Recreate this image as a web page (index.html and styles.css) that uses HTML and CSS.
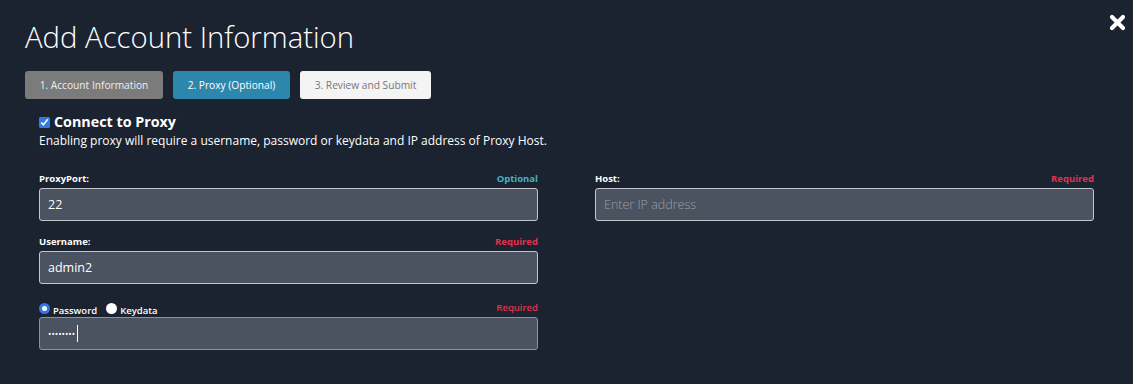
FILE: index.html
```html
<!DOCTYPE html>
<html>
<head>
<meta charset="utf-8">
<link rel="stylesheet" href="styles.css">
</head>
<body>
<div class="page">
  <button class="close" aria-label="Close">
    <svg width="17" height="17" viewBox="0 0 17 17"><path d="M3 3 L14 14 M14 3 L3 14" stroke="#fff" stroke-width="4.2" stroke-linecap="round"/></svg>
  </button>
  <h1 class="title">Add Account Information</h1>
  <div class="steps">
    <div class="step step-done">1. Account Information</div>
    <div class="step step-active">2. Proxy (Optional)</div>
    <div class="step step-next">3. Review and Submit</div>
  </div>
  <div class="section">
    <label class="connect"><input type="checkbox" checked> <span>Connect to Proxy</span></label>
    <p class="desc">Enabling proxy will require a username, password or keydata and IP address of Proxy Host.</p>
    <div class="grid">
      <div class="col">
        <div class="field">
          <div class="labelrow"><span class="lbl">ProxyPort:</span><span class="opt">Optional</span></div>
          <div class="input">22</div>
        </div>
        <div class="field">
          <div class="labelrow"><span class="lbl">Username:</span><span class="req">Required</span></div>
          <div class="input">admin2</div>
        </div>
        <div class="field">
          <div class="labelrow radios">
            <span class="rgroup">
              <label class="radio"><span class="rdot on"></span>Password</label>
              <label class="radio"><span class="rdot"></span>Keydata</label>
            </span>
            <span class="req">Required</span>
          </div>
          <div class="input focus"><span class="dots">••••••••</span><span class="caret"></span></div>
        </div>
      </div>
      <div class="col">
        <div class="field">
          <div class="labelrow"><span class="lbl">Host:</span><span class="req">Required</span></div>
          <div class="input placeholder">Enter IP address</div>
        </div>
      </div>
    </div>
  </div>
</div>
</body>
</html>
```
FILE: styles.css
```css
* { box-sizing: border-box; }
html, body { margin: 0; padding: 0; }
body {
  background: #1b2230;
  font-family: "Open Sans", "Noto Sans", sans-serif;
  color: #fff;
  width: 1133px;
  height: 384px;
  overflow: hidden;
}
.page {
  position: relative;
  padding: 16px 0 0 25px;
}
.close {
  position: absolute;
  top: 14px;
  right: 7px;
  background: none;
  border: 0;
  padding: 0;
  width: 17px;
  height: 17px;
}
.close svg { display: block; }
.title {
  margin: 0;
  font-weight: 300;
  font-size: 29.3px;
  line-height: 42px;
}
.steps {
  display: flex;
  gap: 10px;
  margin-top: 13px;
}
.step {
  height: 28px;
  line-height: 28px;
  font-size: 10.2px;
  border-radius: 3px;
  text-align: center;
}
.step-done { width: 138px; background: #7b7b7b; color: #eee; }
.step-active { width: 117px; background: #2d87ad; color: #fff; }
.step-next { width: 131px; background: #f4f4f4; color: #777; }
.section {
  padding-left: 14px;
  margin-top: 14px;
}
.connect {
  display: flex;
  align-items: center;
  gap: 4px;
  font-weight: 700;
  font-size: 14.3px;
  line-height: 18px;
}
.connect input {
  margin: 0;
  width: 11px;
  height: 11px;
  accent-color: #2f7ae5;
}
.desc {
  margin: 1px 0 0;
  font-size: 12px;
  line-height: 18px;
}
.grid {
  display: grid;
  grid-template-columns: 499px 499px;
  column-gap: 57px;
  margin-top: 21px;
}
.field { margin-bottom: 13px; }
.labelrow {
  display: flex;
  justify-content: space-between;
  align-items: flex-end;
  font-size: 9.5px;
  font-weight: 700;
  height: 14px;
  margin-bottom: 3px;
}
.lbl { color: #fff; }
.opt { color: #3fb6c6; }
.req { color: #e0334f; }
.input {
  height: 33px;
  border: 1.5px solid #c3c7cc;
  border-radius: 3px;
  background: #4b5260;
  padding: 0 8px;
  display: flex;
  align-items: center;
  font-size: 12.5px;
  color: #fff;
}
.input.placeholder { color: #9a9fa8; font-weight: 300; }
.input.focus { border-color: #6c9cc4; }
.dots { font-size: 9px; letter-spacing: 0; }
.caret { width: 1px; height: 17px; background: #fff; margin-left: 2px; }
.radios { font-weight: 600; height: 17px; }
.rgroup { display: flex; gap: 9px; align-items: flex-end; }
.radio { display: flex; align-items: center; gap: 3px; font-size: 9.5px; line-height: 12px; position: relative; top: 3px; }
.rdot {
  width: 11px; height: 11px; border-radius: 50%;
  background: #fff;
  position: relative; top: -3px;
}
.rdot.on { background: #fff; border: 3px solid #2f7ae5; }
```
